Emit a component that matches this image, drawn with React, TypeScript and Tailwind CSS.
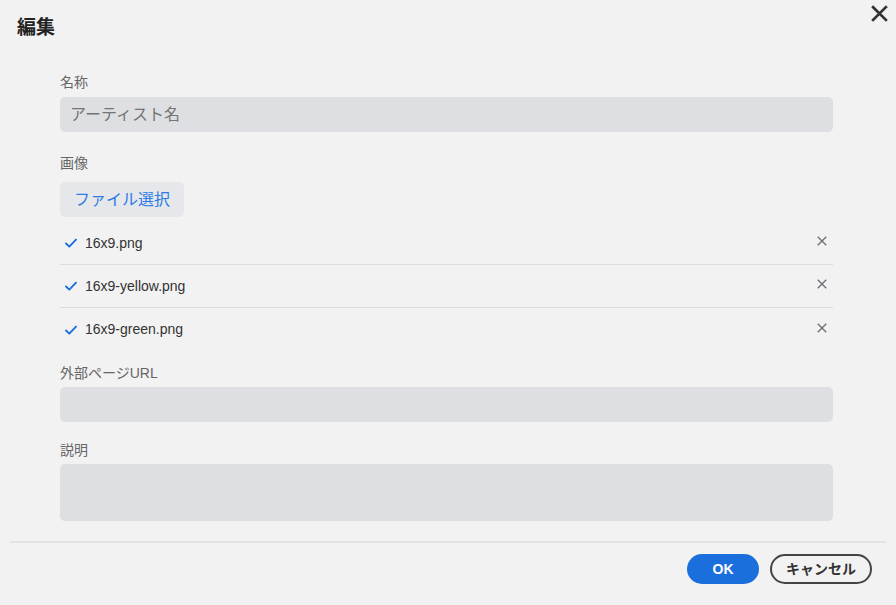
import React from 'react';

const font = '[font-family:"Liberation_Sans","Noto_Sans_CJK_JP",sans-serif]';

const files = ['16x9.png', '16x9-yellow.png', '16x9-green.png'];

const Check = () => (
  <svg width="14" height="14" viewBox="0 0 14 14" fill="none" className="shrink-0">
    <path d="M2 7.5L5.3 10.6L12 3.6" stroke="#1a6fdc" strokeWidth="1.9" strokeLinecap="round" strokeLinejoin="round" />
  </svg>
);

const Cross = ({ size, stroke, color }: { size: number; stroke: number; color: string }) => (
  <svg width={size} height={size} viewBox="0 0 16 16" fill="none">
    <path d="M2 2L14 14M14 2L2 14" stroke={color} strokeWidth={stroke} strokeLinecap="square" />
  </svg>
);

export default function App() {
  return (
    <div className={`relative h-[605px] w-[896px] bg-[#f2f2f2] ${font}`}>
      <button type="button" className="absolute right-[8px] top-[5px] p-0">
        <Cross size={17} stroke={2.6} color="#333" />
      </button>

      <div className="px-[17px] pt-[14px]">
        <h2 className="text-[19px] font-bold leading-[28px] text-[#222]">編集</h2>
      </div>

      <div className="mx-[60px] mt-[30px] w-[773px]">
        <label className="block text-[14px] leading-[20px] text-[#666]">名称</label>
        <input
          placeholder="アーティスト名"
          className="mt-[5px] block h-[35px] w-full rounded-[5px] bg-[#dedfe2] px-[10px] text-[16px] text-[#333] placeholder:text-[#757575] outline-none"
        />

        <label className="mt-[21px] block text-[14px] leading-[20px] text-[#666]">画像</label>
        <button
          type="button"
          className="mt-[9px] block h-[35px] rounded-[5px] bg-[#e5e7ea] px-[14px] text-[16px] text-[#2d7be5]"
        >
          ファイル選択
        </button>

        <ul className="mt-[5px]">
          {files.map((f, i) => (
            <li
              key={f}
              className={`flex h-[43px] items-center pl-[4px] pr-[6px] ${i < files.length - 1 ? 'border-b border-[#dcdcdc]' : ''}`}
            >
              <Check />
              <span className="ml-[7px] flex-1 text-[14px] text-[#333]">{f}</span>
              <span className="mb-[4px] flex">
                <Cross size={10} stroke={2.2} color="#6b6f76" />
              </span>
            </li>
          ))}
        </ul>

        <label className="mt-[12px] block text-[14px] leading-[20px] text-[#666]">外部ページURL</label>
        <input className="mt-[4px] block h-[35px] w-full rounded-[5px] bg-[#dedfe2] px-[10px] outline-none" />

        <label className="mt-[18px] block text-[14px] leading-[20px] text-[#666]">説明</label>
        <textarea className="mt-[4px] block h-[57px] w-full resize-none rounded-[5px] bg-[#dedfe2] px-[10px] outline-none" />
      </div>

      <div className="mx-[10px] mt-[20px] border-t-2 border-[#e3e3e3]" />

      <div className="mt-[11px] flex justify-end gap-[11px] pr-[24px]">
        <button
          type="button"
          className="h-[30px] w-[72px] rounded-full bg-[#1a6fdc] text-[14px] font-bold text-white"
        >
          OK
        </button>
        <button
          type="button"
          className="h-[30px] w-[102px] rounded-full border-2 border-[#444] text-[14px] font-bold text-[#333]"
        >
          キャンセル
        </button>
      </div>
    </div>
  );
}
